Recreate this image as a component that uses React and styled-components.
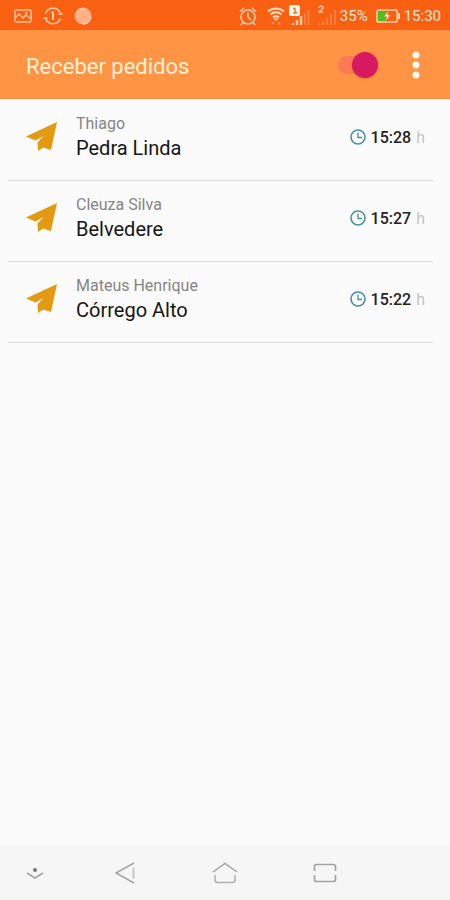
import React, { useState } from "react";
import styled, { createGlobalStyle } from "styled-components";

const GlobalStyle = createGlobalStyle`
  * {
    box-sizing: border-box;
  }
  body {
    margin: 0;
    background: #fbfbfb;
    font-family: Roboto, "Liberation Sans", sans-serif;
  }
  svg {
    display: block;
    flex: none;
  }
`;

const orders = [
  { name: "Thiago", place: "Pedra Linda", time: "15:28" },
  { name: "Cleuza Silva", place: "Belvedere", time: "15:27" },
  { name: "Mateus Henrique", place: "Córrego Alto", time: "15:22" },
];

const Screen = styled.div`
  display: flex;
  flex-direction: column;
  min-height: 100vh;
`;

const StatusBar = styled.div`
  display: flex;
  justify-content: space-between;
  align-items: center;
  height: 30px;
  padding: 2px 9px 0 14px;
  background: #f96012;
  color: #ffe6d0;
  font-size: 15px;
`;

const StatusGroup = styled.div`
  display: flex;
  align-items: center;
  gap: ${(props) => props.$gap}px;
`;

const AppBar = styled.header`
  display: flex;
  align-items: center;
  height: 69px;
  padding: 2px 24px 0 26px;
  background: #ff9544;
  border-bottom: 1px solid #f58d40;
`;

const Title = styled.h1`
  flex: 1;
  margin: 0;
  padding-top: 4px;
  color: #fff0d8;
  font-size: 22px;
  line-height: 28px;
  font-weight: 400;
`;

const Switch = styled.input`
  appearance: none;
  position: relative;
  width: 40px;
  height: 26px;
  margin: 0 28px 0 0;
  cursor: pointer;
  &::before {
    content: "";
    position: absolute;
    inset: 4px 2px 4px 0;
    border-radius: 9px;
    background: #f97a55;
  }
  &::after {
    content: "";
    position: absolute;
    top: 0;
    left: 0;
    width: 26px;
    height: 26px;
    border-radius: 50%;
    background: #f5f5f5;
    box-shadow: 0 1px 2px rgba(150, 60, 30, 0.35);
  }
  &:checked::after {
    left: 14px;
    background: #d71a60;
  }
`;

const IconButton = styled.button`
  display: flex;
  align-items: center;
  justify-content: center;
  padding: 0;
  border: 0;
  background: none;
  color: inherit;
  cursor: pointer;
`;

const OrderList = styled.ul`
  flex: 1;
  margin: 0;
  padding: 1px 17px 0 8px;
  list-style: none;
`;

const OrderRow = styled.li`
  display: flex;
  align-items: center;
  height: 81px;
  padding: 0 8px 6px 16px;
  border-bottom: 1px solid #dadada;
`;

const OrderText = styled.div`
  flex: 1;
  padding-left: 18px;
`;

const CustomerName = styled.div`
  color: #858585;
  font-size: 16px;
  line-height: 22px;
`;

const Place = styled.div`
  color: #151515;
  font-size: 20px;
  line-height: 26px;
`;

const Time = styled.div`
  display: flex;
  align-items: center;
  gap: 5px;
  color: #c4c4c4;
  font-size: 16px;
  time {
    color: #222;
    font-weight: 500;
  }
`;

const NavBar = styled.nav`
  display: grid;
  grid-template-columns: 70fr 110fr 90fr 110fr 70fr;
  height: 55px;
  background: #f6f6f6;
  color: #a3a3a3;
`;

const PictureIcon = () => (
  <svg width="18" height="14" viewBox="0 0 18 14" fill="none" stroke="#ffc396" strokeWidth="1.5">
    <rect x="1" y="1" width="16" height="12" rx="1.5" />
    <path d="M1 9l4-4 4 4 3-3 5 4M11 4h3" />
  </svg>
);

const SyncIcon = () => (
  <svg width="20" height="18" viewBox="0 0 20 18" fill="none" stroke="#ffcfa8" strokeWidth="1.5">
    <path d="M2.500 6.500a8 8 0 0 1 15 0M17.500 11.500a8 8 0 0 1-15 0M0.500 11h4M15.500 7h4" />
    <path d="M10 4.500v8.500M8.500 5.500h1.500" strokeWidth="2" />
  </svg>
);

const BlobIcon = () => (
  <svg width="18" height="18" viewBox="0 0 18 18">
    <circle cx="9" cy="9" r="8.500" fill="#ffb184" />
    <path d="M3 6a7 7 0 0 1 7-4M9 17a8 8 0 0 0 8-7" fill="none" stroke="#ffd0b0" strokeWidth="1.500" />
  </svg>
);

const AlarmIcon = () => (
  <svg width="18" height="19" viewBox="0 0 18 19" fill="none" stroke="#ffd0ac" strokeWidth="1.600">
    <circle cx="9" cy="10" r="7" />
    <path d="M9 5.500V10l3 3M1 4.500L5 1M17 4.500L13 1M4 15.500L2 18M14 15.500l2 2.500" />
  </svg>
);

const WifiIcon = () => (
  <svg width="18" height="18" viewBox="0 0 18 18" fill="none" stroke="#ffdcc0" strokeWidth="2">
    <path d="M1 4.500a12 12 0 0 1 16 0M3.500 7.500a8 8 0 0 1 11 0M6 10.500a4.500 4.500 0 0 1 6 0" />
    <path d="M6.500 11.500h5L9 14z" fill="#ffdcc0" stroke="none" />
    <path d="M4 15h4l-2 2.500zM10 17.500h4L12 15z" fill="#ff9a62" stroke="none" />
  </svg>
);

const SignalOneIcon = () => (
  <svg width="21" height="22" viewBox="0 0 21 22">
    <path d="M4 20v-2M8 20v-5M12 20v-9" stroke="#ffc79e" strokeWidth="2.500" />
    <path d="M16 20V8M19.500 20V5" stroke="#ff8748" strokeWidth="1.500" />
    <rect width="11" height="11" rx="2" fill="#fff5e6" />
    <path d="M4 3.500h2V8M4 8h4" fill="none" stroke="#f97a34" strokeWidth="1.500" />
  </svg>
);

const SignalTwoIcon = () => (
  <svg width="18" height="22" viewBox="0 0 18 22" fill="none">
    <path d="M1 20v-2M5 20v-4M9 20v-7M13 20V9M17 20V5" stroke="#ff8a4c" strokeWidth="1.500" />
    <path d="M1 3c0-2.500 4-2.500 4 0C5 4.500 1 5.500 1 7h4" stroke="#ffc79e" strokeWidth="1.500" />
  </svg>
);

const BatteryIcon = () => (
  <svg width="24" height="14" viewBox="0 0 24 14">
    <rect x="1" y="1" width="20" height="12" rx="1" fill="none" stroke="#ffd0ac" strokeWidth="1.500" />
    <rect x="2" y="2" width="7" height="10" fill="#4fbd1c" />
    <path d="M22 4h2v6h-2z" fill="#ffd0ac" />
    <path d="M12.500 2L8 7.500h3L9.500 12l5-6h-3z" fill="#ffe3c8" />
  </svg>
);

const MoreIcon = () => (
  <svg width="20" height="28" viewBox="0 0 20 28" fill="#fffaf0">
    <circle cx="10" cy="4" r="3.500" />
    <circle cx="10" cy="14" r="3.500" />
    <circle cx="10" cy="24" r="3.500" />
  </svg>
);

const PlaneIcon = () => (
  <svg width="34" height="32" viewBox="0 0 34 32" fill="#e39a10">
    <path d="M33 1L2 15.500l9.500 4L19.500 15l-6 6.500L14 30l5-3.500 8 2.500z" />
  </svg>
);

const ClockIcon = () => (
  <svg width="16" height="16" viewBox="0 0 16 16" fill="none" stroke="#4a8f9f" strokeWidth="1.600">
    <circle cx="8" cy="8" r="7" />
    <path d="M8 3.500V8.500h4" strokeWidth="1.300" />
  </svg>
);

const HideIcon = () => (
  <svg width="18" height="14" viewBox="0 0 18 14" fill="none" stroke="currentColor" strokeWidth="1.500">
    <circle cx="9" cy="4" r="2" fill="#777" stroke="none" />
    <path d="M1 7l8 5 8-5" />
  </svg>
);

const BackIcon = () => (
  <svg width="20" height="22" viewBox="0 0 20 22" fill="none" stroke="currentColor" strokeWidth="1.500">
    <path d="M19 1L1 11l18 10" />
    <path d="M18.500 5.500v11" stroke="#c6c6c6" strokeWidth="2" />
  </svg>
);

const HomeIcon = () => (
  <svg width="26" height="22" viewBox="0 0 26 22" fill="none" stroke="currentColor" strokeWidth="1.500">
    <path d="M1 10l12-8.500L25 10" />
    <path d="M3 13v5q0 2.500 2.500 2.500h15q2.500 0 2.500-2.500v-5" stroke="#b0b0b0" />
  </svg>
);

const RecentIcon = () => (
  <svg width="24" height="20" viewBox="0 0 24 20" fill="none" stroke="currentColor" strokeWidth="1.700">
    <path d="M1.500 8V3.500q0-2 2-2h17q2 0 2 2v4.500M1.500 12v4.500q0 2 2 2h17q2 0 2-2v-4.500" />
  </svg>
);

const Order = ({ name, place, time }) => (
  <OrderRow>
    <PlaneIcon />
    <OrderText>
      <CustomerName>{name}</CustomerName>
      <Place>{place}</Place>
    </OrderText>
    <Time>
      <ClockIcon />
      <time>{time}</time>
      <span>h</span>
    </Time>
  </OrderRow>
);

const App = () => {
  const [receiving, setReceiving] = useState(true);

  return (
    <Screen>
      <GlobalStyle />
      <StatusBar>
        <StatusGroup $gap={11}>
          <PictureIcon />
          <SyncIcon />
          <BlobIcon />
        </StatusGroup>
        <StatusGroup $gap={4}>
          <StatusGroup $gap={10}>
            <AlarmIcon />
            <WifiIcon />
          </StatusGroup>
          <StatusGroup $gap={8}>
            <SignalOneIcon />
            <SignalTwoIcon />
          </StatusGroup>
          <StatusGroup $gap={8}>
            <span>35%</span>
            <BatteryIcon />
          </StatusGroup>
          <span>15:30</span>
        </StatusGroup>
      </StatusBar>
      <AppBar>
        <Title id="receive-title">Receber pedidos</Title>
        <Switch
          type="checkbox"
          role="switch"
          aria-labelledby="receive-title"
          checked={receiving}
          onChange={(e) => setReceiving(e.target.checked)}
        />
        <IconButton aria-label="Mais opções">
          <MoreIcon />
        </IconButton>
      </AppBar>
      <OrderList>
        {orders.map((order) => (
          <Order key={order.name} {...order} />
        ))}
      </OrderList>
      <NavBar>
        <IconButton aria-label="Ocultar">
          <HideIcon />
        </IconButton>
        <IconButton aria-label="Voltar">
          <BackIcon />
        </IconButton>
        <IconButton aria-label="Início">
          <HomeIcon />
        </IconButton>
        <IconButton aria-label="Recentes">
          <RecentIcon />
        </IconButton>
      </NavBar>
    </Screen>
  );
};

export default App;
